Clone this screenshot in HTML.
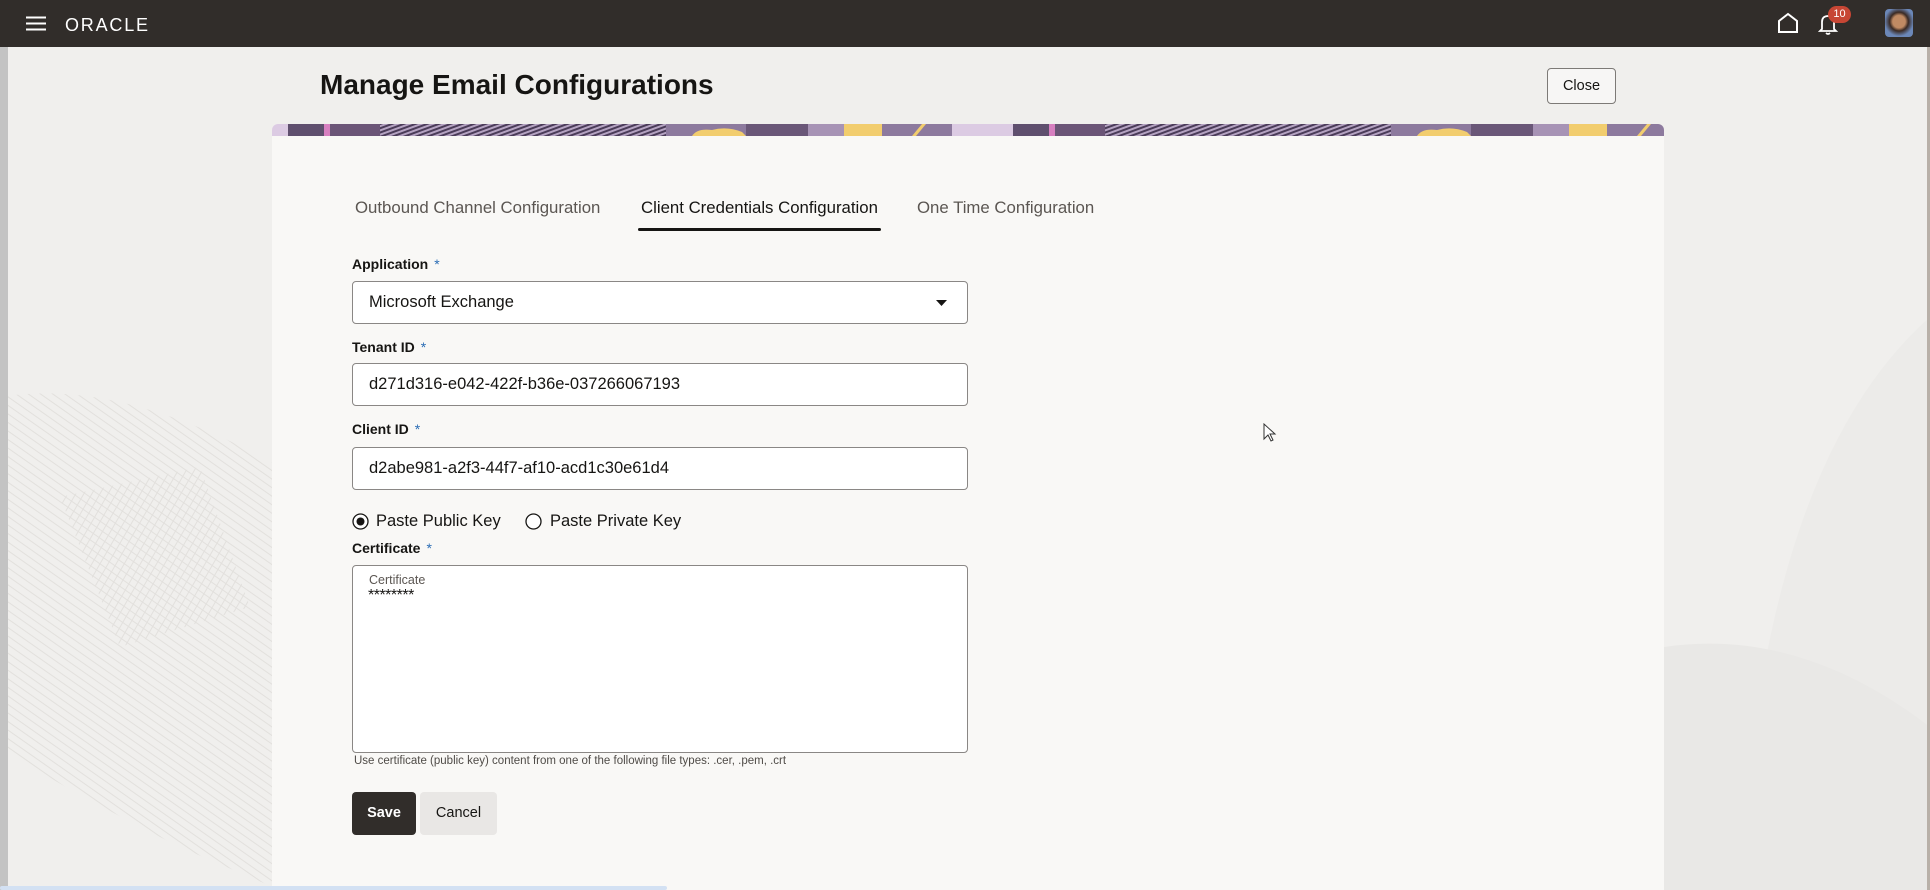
<!DOCTYPE html>
<html><head><meta charset="utf-8"><style>
*{box-sizing:border-box;margin:0;padding:0}
body{width:1930px;height:890px;overflow:hidden;background:#f0efed;font-family:"Liberation Sans",sans-serif;color:#161513;position:relative}
.abs{position:absolute}
.hdr{left:0;top:0;width:1930px;height:47px;background:#312d2a}
.lbl{position:absolute;left:352px;font-size:14px;font-weight:bold;color:#161513}
.lbl b{color:#2b6db5;font-weight:normal;margin-left:6px}
.inp{position:absolute;left:352px;width:616px;height:43px;border:1px solid #8a8785;border-radius:4px;background:#fff;font-size:16.5px;padding-left:16px;line-height:41px;color:#161513}
.tab{position:absolute;top:198px;font-size:16.8px;color:#5b5652}
</style></head><body>
<svg class="abs" style="left:0;top:47px" width="1930" height="843">
<defs><pattern id="h" width="7" height="7" patternUnits="userSpaceOnUse" patternTransform="rotate(35)"><line x1="0" y1="2" x2="7" y2="2" stroke="#e2e0dd" stroke-width="1"/></pattern>
<pattern id="h2" width="7" height="7" patternUnits="userSpaceOnUse" patternTransform="rotate(-60)"><line x1="0" y1="2" x2="7" y2="2" stroke="#e2e0dd" stroke-width="1"/></pattern></defs>
<path d="M0 350 Q120 330 280 420 L280 843 L180 800 Q60 740 0 700Z" fill="url(#h)"/>
<path d="M60 450 L200 420 L250 560 L120 600Z" fill="url(#h2)"/>
<path d="M1740 843 Q1760 420 1930 270 L1930 843Z" fill="#ecebe9"/>
<path d="M1664 600 Q1800 580 1930 680 L1930 843 L1664 843Z" fill="#e9e8e6"/>
</svg>
<div class="abs" style="left:0;top:0;width:8px;height:890px;background:#c3c3c3"></div>
<div class="abs" style="left:1927px;top:47px;width:3px;height:843px;background:#b8b0a8"></div>
<div class="abs hdr"></div>
<svg class="abs" style="left:26px;top:16px" width="20" height="15"><path d="M0 1.5H20M0 7.5H20M0 13.5H20" stroke="#fff" stroke-width="2"/></svg>
<div class="abs" style="left:65px;top:15px;color:#fff;font-size:18px;letter-spacing:1.8px">ORACLE</div>
<svg class="abs" style="left:1777px;top:12px" width="22" height="22"><path d="M2 20V9L11 2L20 9V20Z" fill="none" stroke="#fff" stroke-width="2"/></svg>
<svg class="abs" style="left:1818px;top:12px" width="22" height="24"><path d="M4 17V10Q4 4 10 4Q16 4 16 10V17L18 19H2Z" fill="none" stroke="#fff" stroke-width="1.8"/><path d="M8 21Q10 23 12 21" stroke="#fff" fill="none" stroke-width="1.6"/></svg>
<div class="abs" style="left:1828px;top:6px;width:23px;height:17px;border-radius:9px;background:#c74634;color:#fff;font-size:11px;text-align:center;line-height:17px">10</div>
<div class="abs" style="left:1885px;top:9px;width:28px;height:28px;border-radius:4px;background:radial-gradient(circle at 50% 45%,#c08a63 0 30%,#3a2a24 45%,#6b87b8 70%)"></div>
<div class="abs" style="left:320px;top:69px;font-size:28px;font-weight:bold;color:#161513">Manage Email Configurations</div>
<div class="abs" style="left:1547px;top:68px;width:69px;height:36px;border:1px solid #7d7a77;border-radius:4px;background:#f7f6f5;font-size:14.5px;text-align:center;line-height:34px">Close</div>
<div class="abs" style="left:272px;top:124px;width:1392px;height:766px;background:#f9f8f6;border-radius:6px 6px 0 0;overflow:hidden">
<svg width="1392" height="12" style="display:block">
<defs><pattern id="hb" width="4" height="4" patternUnits="userSpaceOnUse" patternTransform="rotate(70)"><rect width="4" height="4" fill="#b5a3c2"/><rect width="2" height="4" fill="#4a3b58"/></pattern></defs>
<g id="per">
<rect x="0" y="0" width="16" height="12" fill="#dccbe3"/>
<rect x="16" y="0" width="36" height="12" fill="#5f4f6e"/>
<rect x="52" y="0" width="6" height="12" fill="#d77fc0"/>
<rect x="58" y="0" width="50" height="12" fill="#6b5577"/>
<rect x="108" y="0" width="286" height="12" fill="url(#hb)"/>
<rect x="394" y="0" width="80" height="12" fill="#8d7a9e"/>
<path d="M420 12 Q425 4 440 6 Q455 2 470 8 L474 12Z" fill="#f2cd6e"/>
<rect x="474" y="0" width="62" height="12" fill="#6a5778"/>
<rect x="536" y="0" width="36" height="12" fill="#a793b5"/>
<path d="M572 0H610L630 12H572Z" fill="#f2cd6e"/>
<rect x="610" y="0" width="70" height="12" fill="#8d7a9e"/>
<path d="M640 12L650 0H654L644 12Z" fill="#f2cd6e"/>
<rect x="680" y="0" width="45" height="12" fill="#dccbe3"/>
</g>
<use href="#per" x="725"/>
</svg>
</div>
<div class="tab" style="left:355px">Outbound Channel Configuration</div>
<div class="tab" style="left:641px;color:#161513">Client Credentials Configuration</div>
<div class="abs" style="left:638px;top:228px;width:243px;height:3px;background:#161513;border-radius:2px"></div>
<div class="tab" style="left:917px">One Time Configuration</div>
<div class="lbl" style="top:256px">Application<b>*</b></div>
<div class="inp" style="top:281px">Microsoft Exchange<svg class="abs" style="right:20px;top:18px" width="11" height="6"><path d="M0 0H11L5.5 6Z" fill="#161513"/></svg></div>
<div class="lbl" style="top:339px">Tenant ID<b>*</b></div>
<div class="inp" style="top:363px">d271d316-e042-422f-b36e-037266067193</div>
<div class="lbl" style="top:421px">Client ID<b>*</b></div>
<div class="inp" style="top:447px">d2abe981-a2f3-44f7-af10-acd1c30e61d4</div>
<svg class="abs" style="left:352px;top:513px" width="17" height="17"><circle cx="8.5" cy="8.5" r="7.5" fill="#fff" stroke="#161513" stroke-width="1.3"/><circle cx="8.5" cy="8.5" r="4" fill="#161513"/></svg>
<div class="abs" style="left:376px;top:512px;font-size:16.5px">Paste Public Key</div>
<svg class="abs" style="left:525px;top:513px" width="17" height="17"><circle cx="8.5" cy="8.5" r="7.5" fill="#fff" stroke="#161513" stroke-width="1.3"/></svg>
<div class="abs" style="left:550px;top:512px;font-size:16.5px">Paste Private Key</div>
<div class="lbl" style="top:540px">Certificate<b>*</b></div>
<div class="abs" style="left:352px;top:565px;width:616px;height:188px;border:1px solid #8a8785;border-radius:4px;background:#fff"></div>
<div class="abs" style="left:369px;top:573px;font-size:12.5px;color:#5b5652">Certificate</div>
<div class="abs" style="left:368px;top:588px;font-size:16px;line-height:16px;color:#161513;letter-spacing:-0.5px">********</div>
<div class="abs" style="left:354px;top:755px;font-size:11.5px;color:#4f4b47">Use certificate (public key) content from one of the following file types: .cer, .pem, .crt</div>
<div class="abs" style="left:352px;top:792px;width:64px;height:43px;border-radius:4px;background:#312d2a;color:#fff;font-weight:bold;font-size:14.5px;text-align:center;line-height:43px">Save</div>
<div class="abs" style="left:420px;top:792px;width:77px;height:43px;border-radius:4px;background:#e9e7e5;color:#161513;font-size:14.5px;text-align:center;line-height:43px">Cancel</div>
<div class="abs" style="left:0;top:886px;width:667px;height:4px;background:#d3e1f3;border-radius:2px"></div>
<svg class="abs" style="left:1263px;top:423px" width="14" height="20"><path d="M1 1V16L5 12L8 18L10 17L7 11H12Z" fill="#fff" stroke="#333" stroke-width="1"/></svg>
</body></html>
